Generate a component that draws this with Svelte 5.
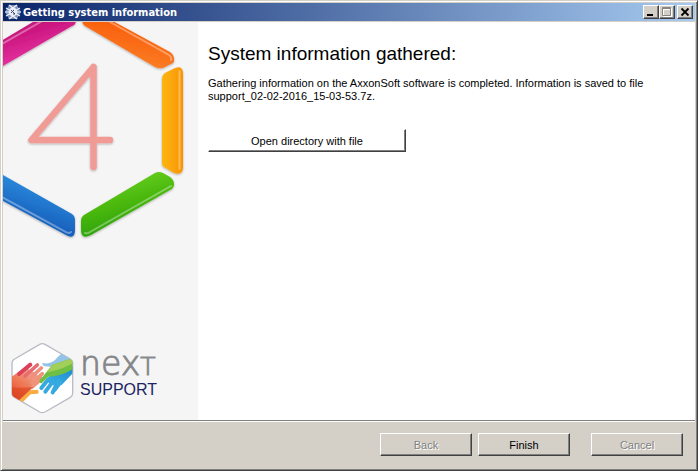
<script lang="ts">
	interface Props {
		fileName?: string;
	}

	let { fileName = 'support_02-02-2016_15-03-53.7z' }: Props = $props();
</script>

<div class="window">
	<header class="titlebar">
		<svg class="app-icon" viewBox="0 0 16 16" aria-hidden="true">
			<path d="M4 1 L12 1 L16 8 L12 15 L4 15 L0 8 Z" fill="#7f92b8" />
			<path
				d="M4 1 L8 4 L12 1 M4 15 L8 12 L12 15 M0 8 H16 M1 4 L15 12 M1 12 L15 4"
				fill="none"
				stroke="#f2f5fa"
				stroke-width="1.2"
			/>
			<circle cx="8" cy="8" r="4.4" fill="#e9eef6" />
			<path d="M6 6 L10 10 M6 9 L9 6 M8 10 H10" stroke="#34466f" stroke-width="1" />
		</svg>
		<h1 class="title">Getting system information</h1>
		<div class="controls">
			<button class="control" aria-label="Minimize">
				<svg viewBox="0 0 12 10"><path d="M2 7 H8 V9 H2 Z" fill="#000" /></svg>
			</button>
			<button class="control" aria-label="Maximize" disabled>
				<svg viewBox="0 0 12 10">
					<path d="M2.5 1.5 H10.5 V9.5 H2.5 Z M2 2.5 H11" fill="none" stroke="#fff" />
					<path d="M1.5 .5 H9.5 V8.5 H1.5 Z M1 1.5 H10" fill="none" stroke="#87857f" />
				</svg>
			</button>
			<button class="control close" aria-label="Close">
				<svg viewBox="0 0 12 10">
					<path d="M2.5 1.5 L9.5 8.5 M9.5 1.5 L2.5 8.5" stroke="#000" stroke-width="1.8" />
				</svg>
			</button>
		</div>
	</header>

	<div class="body">
		<aside class="sidebar">
			<svg class="art" viewBox="3 22 195 220" aria-label="4">
				<defs>
					<linearGradient id="pink" x1="0" y1="0" x2=".5" y2="1">
						<stop offset=".3" stop-color="#c8127c" />
						<stop offset="1" stop-color="#ef3fae" />
					</linearGradient>
					<linearGradient id="orange" x1=".7" y1="0" x2=".3" y2="1">
						<stop offset=".2" stop-color="#f9600d" />
						<stop offset="1" stop-color="#fb8429" />
					</linearGradient>
					<linearGradient id="yellow">
						<stop offset="0" stop-color="#fcb60f" />
						<stop offset="1" stop-color="#fa9303" />
					</linearGradient>
					<linearGradient id="green" x1=".3" y1="0" x2=".7" y2="1">
						<stop offset=".2" stop-color="#5fc913" />
						<stop offset=".8" stop-color="#2fa30e" />
					</linearGradient>
					<linearGradient id="blue" x1=".7" y1="0" x2=".3" y2="1">
						<stop offset=".1" stop-color="#3096e4" />
						<stop offset=".8" stop-color="#155bb9" />
					</linearGradient>
					<filter id="shadow" x="-10%" y="-10%" width="120%" height="120%">
						<feDropShadow dx="0" dy="1" stdDeviation=".8" flood-opacity=".3" />
					</filter>
				</defs>
				<g filter="url(#shadow)">
					<path d="M-4 44 L38 19 H76 V22 Q75 25 72 26 L-4 70 Z" fill="url(#pink)" />
					<path
						d="M82 19 H109 L170 52 Q174 55 174 59 V61 Q174 63 171 64 L163 68 Q159 69 155 67 L85 26 Q82 24 82 19 Z"
						fill="url(#orange)"
					/>
					<path
						d="M162 79 Q162 75 165 73 L173 69 Q183 64 183 74 V167 Q183 176 174 173 L164 167 Q162 166 162 163 Z"
						fill="url(#yellow)"
					/>
					<path
						d="M84 215 L155 173 Q159 171 163 173 L170 177 Q174 180 174 184 Q174 188 170 190 L91 235 Q81 240 81 230 V221 Q81 217 84 215 Z"
						fill="url(#green)"
					/>
					<path
						d="M-4 171 L72 214 Q75 216 75 220 V230 Q75 240 66 235 L-4 197 Z"
						fill="url(#blue)"
					/>
					<path
						d="M93.5 67 V167 M93.5 67 L31.5 140 H110"
						fill="none"
						stroke="#f19b97"
						stroke-width="6.5"
						stroke-linecap="round"
						stroke-linejoin="round"
					/>
				</g>
				<g fill="none" stroke="#fff" stroke-opacity=".35" stroke-width="2" stroke-linecap="round">
					<path d="M0 45 L44 20 M110 22 L169 55 Q172 57 171 60" />
					<path d="M179.5 71 V169 M171 186 L90 232 Q87 234 85 233 M0 196 L66 232 Q69 234 71 232" />
				</g>
			</svg>

			<div class="logo">
				<svg class="hands" viewBox="0 0 225 240" aria-hidden="true">
					<defs>
						<clipPath id="hexagon">
							<path d="M29 63 L104 19 Q112 15 120 19 L196 63 Q203 67 203 75 V166 Q203 174 196 178 L120 222 Q112 226 104 222 L29 178 Q21 174 21 166 V75 Q21 67 29 63 Z" />
						</clipPath>
						<linearGradient id="palm" x1=".8" y1="0" x2=".2" y2="1">
							<stop offset=".2" stop-color="#ef9a7c" />
							<stop offset=".65" stop-color="#ee6b48" />
							<stop offset="1" stop-color="#d83f1d" />
						</linearGradient>
						<linearGradient id="sky" x1="1" y1="0" x2="0" y2="1">
							<stop offset="0" stop-color="#2287c9" />
							<stop offset="1" stop-color="#37b5e8" />
						</linearGradient>
					</defs>
					<path
						d="M29 63 L104 19 Q112 15 120 19 L196 63 Q203 67 203 75 V166 Q203 174 196 178 L120 222 Q112 226 104 222 L29 178 Q21 174 21 166 V75 Q21 67 29 63 Z"
						fill="#fff"
						stroke="#b9bbc5"
						stroke-width="4"
					/>
					<g clip-path="url(#hexagon)" stroke-linecap="round">
						<path d="M34 192 Q50 164 70 157 L97 155 Q105 161 98 167 L77 169 L48 197 Z" fill="#f8ac42" />
						<path d="M15 120 L60 88 L96 108 L102 132 L76 155 L38 190 H15 Z" fill="url(#palm)" />
						<path d="M42 108 L76 80" stroke="#df4057" stroke-width="12" />
						<path d="M60 114 L97 81" stroke="#e76b70" stroke-width="11" />
						<path d="M74 122 L109 90" stroke="#ee8f80" stroke-width="11" />
						<path d="M82 134 L112 107 M82 147 L110 122" stroke="#ef937a" stroke-width="11" />
						<path d="M15 148 Q57 151 85 147 L38 190 H15 Z" fill="#db451f" fill-opacity=".65" />
						<path
							d="M112 75 Q141 81 158 57 L175 42 L205 65 L172 80 Q147 89 119 85 Q111 82 112 75 Z"
							fill="#94c3e8"
						/>
						<path d="M205 86 V104 L170 141 L148 143 L122 130 L137 107 Z" fill="url(#sky)" />
						<path
							d="M130 124 L109 150 M144 130 L121 161 M160 128 L143 163"
							stroke="#36a9e0"
							stroke-width="12"
						/>
						<path d="M168 132 L150 156" stroke="#36a9e0" stroke-width="10" />
						<path
							d="M142 80 L205 60 V93 Q163 116 130 116 L110 136 Q101 136 104 127 L124 103 Z"
							fill="#70bf45"
						/>
						<path d="M142 80 L205 60 V75 Q165 97 124 103 Z" fill="#a1cf58" />
					</g>
				</svg>
				<div class="wordmark">
					<span class="next">nex<span class="next-cap">T</span></span>
					<span class="support">SUPPORT</span>
				</div>
			</div>
		</aside>

		<main class="content">
			<h2 class="heading">System information gathered:</h2>
			<p class="message">
				Gathering information on the AxxonSoft software is completed. Information is saved to file
				<br />{fileName}.
			</p>
			<button class="button open">Open directory with file</button>
		</main>
	</div>

	<footer class="footer">
		<button class="button" disabled>Back</button>
		<button class="button">Finish</button>
		<button class="button cancel" disabled>Cancel</button>
	</footer>
</div>

<style>
	:global(body) {
		margin: 0;
		background: #d4d0c8;
	}

	.window {
		box-sizing: border-box;
		display: flex;
		flex-direction: column;
		min-height: 100vh;
		padding: 1px 0 0 1px;
		border: 1px solid;
		border-color: #d4d0c8 #404040 #404040 #d4d0c8;
		box-shadow:
			inset 1px 1px #fff,
			inset -1px -1px #808080;
		background: #d4d0c8;
		font-family: 'Liberation Sans', Arial, sans-serif;
		font-size: 11px;
		color: #000;
	}

	.titlebar {
		display: flex;
		align-items: center;
		height: 18px;
		margin: 1px 2px 1px 1px;
		padding: 0 2px;
		background: linear-gradient(to right, #0a246a, #a6caf0);
	}

	.app-icon {
		width: 16px;
		height: 16px;
	}

	.title {
		flex: 1;
		margin: 0 0 0 2px;
		font-family: 'DejaVu Sans Condensed', 'DejaVu Sans', sans-serif;
		font-size: 11px;
		font-weight: bold;
		color: #fff;
	}

	.controls {
		display: flex;
	}

	.control {
		width: 16px;
		height: 14px;
		padding: 0;
		border: 1px solid;
		border-color: #fff #404040 #404040 #fff;
		box-shadow: inset -1px -1px #808080;
		background: #d4d0c8;
	}

	.control svg {
		display: block;
		width: 12px;
		height: 10px;
		margin: 1px;
	}

	.close {
		margin-left: 2px;
	}

	.body {
		flex: 1;
		display: flex;
		margin: 0 2px 0 1px;
		border-bottom: 1px solid #808080;
		background: #fff;
	}

	.sidebar {
		display: flex;
		flex-direction: column;
		justify-content: space-between;
		width: 195px;
		flex-shrink: 0;
		background: #f5f5f5;
	}

	.art {
		display: block;
		width: 195px;
		height: 220px;
	}

	.logo {
		display: flex;
		padding: 0 0 2px 2px;
	}

	.hands {
		width: 75px;
		height: 80px;
	}

	.wordmark {
		display: flex;
		flex-direction: column;
		padding-top: 10px;
	}

	.next {
		font-family: 'DejaVu Sans Light', 'DejaVu Sans', sans-serif;
		font-weight: 200;
		font-size: 33px;
		line-height: 31px;
		color: #77787b;
		-webkit-text-stroke: 1px #8a8b8e;
	}

	.next-cap {
		font-size: 25px;
	}

	.support {
		font-family: 'Liberation Sans', Arial, sans-serif;
		font-size: 16px;
		line-height: 16px;
		color: #1c2463;
	}

	.content {
		flex: 1;
		padding: 20px 10px;
	}

	.heading {
		margin: 0 0 11px;
		font-size: 19px;
		font-weight: normal;
		line-height: 24px;
	}

	.message {
		margin: 0 0 26px;
		line-height: 13px;
	}

	.button {
		width: 92px;
		height: 23px;
		padding: 0;
		border: 1px solid;
		border-color: #fff #404040 #404040 #fff;
		box-shadow: inset -1px -1px #808080;
		background: #d4d0c8;
		font: inherit;
		color: #000;
	}

	.button:disabled {
		color: #808080;
		text-shadow: 1px 1px #fff;
	}

	.open {
		width: 198px;
		background: #fff;
	}

	.footer {
		display: flex;
		justify-content: flex-end;
		gap: 6px;
		margin: 0 2px 0 1px;
		padding: 11px 12px 14px;
		border-top: 1px solid #fff;
	}

	.cancel {
		margin-left: 15px;
	}
</style>
